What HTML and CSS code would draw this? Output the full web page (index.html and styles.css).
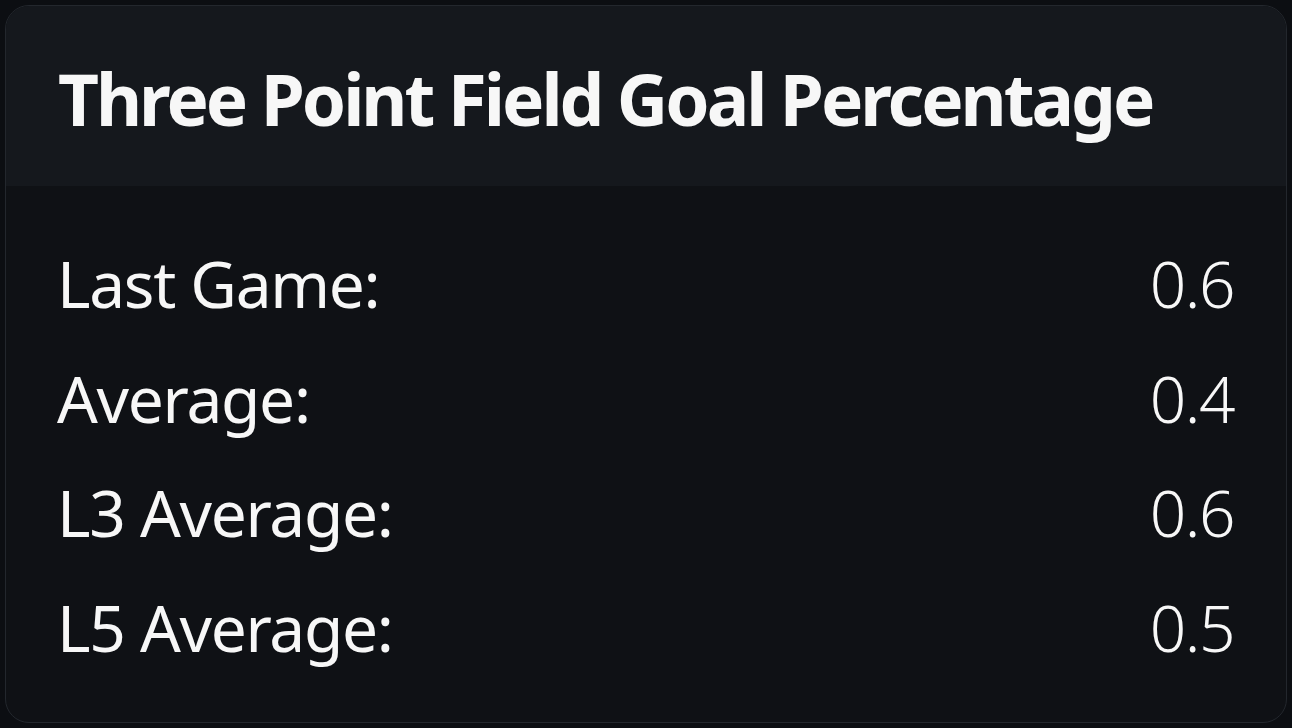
FILE: index.html
```html
<!DOCTYPE html>
<html>
<head>
<meta charset="utf-8">
<link rel="stylesheet" href="styles.css">
</head>
<body>
<div class="card">
  <div class="card-header">
    <h1 class="title">Three Point Field Goal Percentage</h1>
  </div>
  <div class="card-body">
    <div class="row"><span class="label">Last Game:</span><span class="value">0.6</span></div>
    <div class="row"><span class="label">Average:</span><span class="value">0.4</span></div>
    <div class="row"><span class="label">L3 Average:</span><span class="value">0.6</span></div>
    <div class="row"><span class="label">L5 Average:</span><span class="value">0.5</span></div>
  </div>
</div>
</body>
</html>
```
FILE: styles.css
```css
html, body {
  margin: 0;
  padding: 0;
  background: #0c0e12;
}
body {
  padding: 5px;
  height: 728px;
  box-sizing: border-box;
  font-family: "Noto Sans", "Open Sans", sans-serif;
  color: #f7f7f7;
}
.card {
  height: 718px;
  box-sizing: border-box;
  border: 1px solid #23272d;
  border-radius: 24px;
  overflow: hidden;
  background: #0f1115;
  display: flex;
  flex-direction: column;
}
.card-header {
  height: 180px;
  box-sizing: border-box;
  flex: none;
  background: #15181d;
  display: flex;
  align-items: center;
  padding: 4px 51px 0 52px;
}
.title {
  margin: 0;
  font-size: 71px;
  font-weight: 700;
  letter-spacing: -3px;
  line-height: 1;
  white-space: nowrap;
}
.card-body {
  padding: 41px 52px 0 51px;
  display: flex;
  flex-direction: column;
}
.row {
  display: flex;
  justify-content: space-between;
  align-items: baseline;
  height: 114.5px;
  font-size: 64px;
  line-height: 114.5px;
}
.label {
  font-weight: 400;
  letter-spacing: -1.3px;
}
.value {
  font-weight: 300;
  letter-spacing: -1.5px;
}
```
